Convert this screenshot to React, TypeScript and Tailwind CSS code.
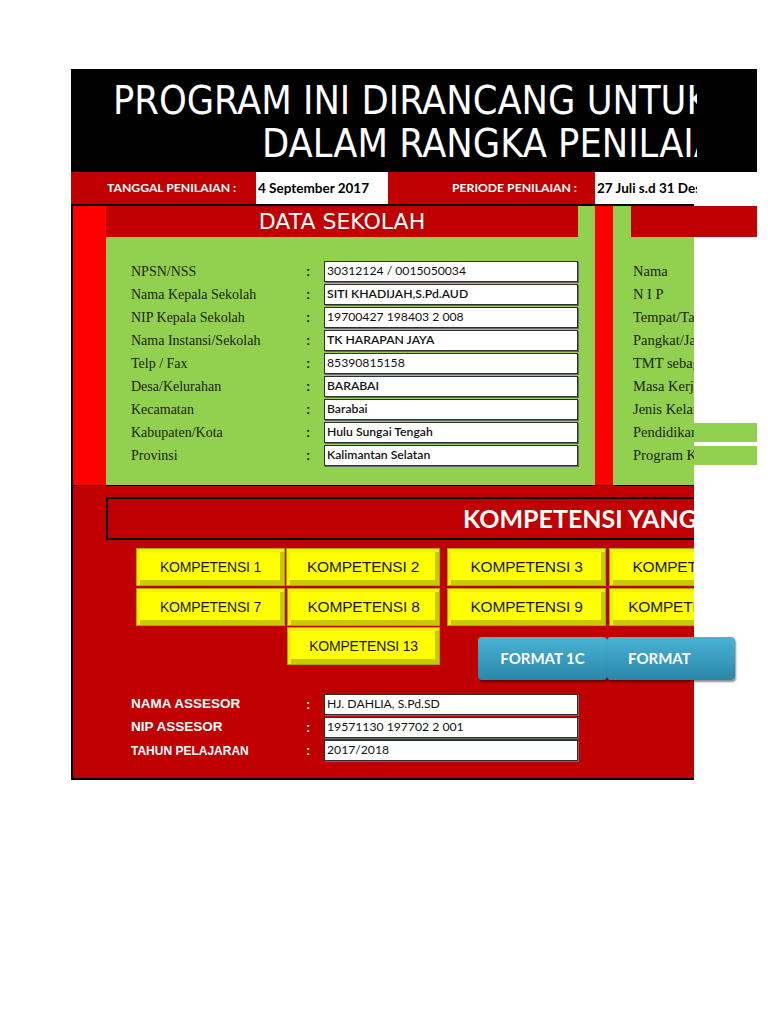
import type { ReactNode } from 'react';

const serif = { fontFamily: '"Liberation Serif", "Times New Roman", serif' };
const calibri = { fontFamily: 'Lato, "Open Sans", sans-serif' };
const dejavu = { fontFamily: '"DejaVu Sans", sans-serif' };
const arial = { fontFamily: '"Liberation Sans", Arial, sans-serif' };

const sekolah: { label: string; value: string; strong?: boolean }[] = [
  { label: 'NPSN/NSS', value: '30312124 / 0015050034' },
  { label: 'Nama Kepala Sekolah', value: 'SITI KHADIJAH,S.Pd.AUD', strong: true },
  { label: 'NIP Kepala Sekolah', value: '19700427 198403 2 008' },
  { label: 'Nama Instansi/Sekolah', value: 'TK HARAPAN JAYA', strong: true },
  { label: 'Telp / Fax', value: '85390815158' },
  { label: 'Desa/Kelurahan', value: 'BARABAI', strong: true },
  { label: 'Kecamatan', value: 'Barabai', strong: true },
  { label: 'Kabupaten/Kota', value: 'Hulu Sungai Tengah', strong: true },
  { label: 'Provinsi', value: 'Kalimantan Selatan', strong: true },
];

const guru: { label: string; extra?: boolean }[] = [
  { label: 'Nama' },
  { label: 'N I P' },
  { label: 'Tempat/Tanggal Lahir' },
  { label: 'Pangkat/Jabatan' },
  { label: 'TMT sebagai Guru' },
  { label: 'Masa Kerja' },
  { label: 'Jenis Kelamin' },
  { label: 'Pendidikan', extra: true },
  { label: 'Program Keahlian', extra: true },
];

const assesor = [
  { label: 'NAMA ASSESOR', value: 'HJ. DAHLIA, S.Pd.SD', size: 'text-[13.5px]' },
  { label: 'NIP ASSESOR', value: '19571130 197702 2 001', size: 'text-[13.5px]' },
  { label: 'TAHUN PELAJARAN', value: '2017/2018', size: 'text-[12px]' },
];

function InputBox({ children, strong }: Readonly<{ children: ReactNode; strong?: boolean }>) {
  return (
    <div
      className={
        'flex h-[21px] w-[254px] items-center border border-[#2f2f2f] bg-white pl-[2px] text-[12.2px] leading-none text-[#111] shadow-[1px_1px_0_#6b6b6b] ' +
        (strong ? 'font-semibold' : 'font-normal')
      }
      style={calibri}
    >
      {children}
    </div>
  );
}

function KButton({ label, width, big }: Readonly<{ label: string; width: string; big?: boolean }>) {
  return (
    <div
      className={
        'flex h-[38px] shrink-0 items-center justify-center border border-[#a8a800] bg-[#ffff00] text-[#1a1a00] shadow-[inset_3px_3px_0_#f2f200,inset_-4px_-5px_0_#c9c900] ' +
        width +
        ' ' +
        (big ? 'text-[15.5px]' : 'text-[14px]')
      }
      style={arial}
    >
      <span className="tracking-[-0.2px]">{label}</span>
    </div>
  );
}

// the sheet's print area stops at x=694, so the second label is cut there
function FormatButton({ label, width, clip }: Readonly<{ label: string; width: string; clip?: boolean }>) {
  return (
    <div
      className={
        'flex h-[43px] shrink-0 items-center rounded-[4px] bg-gradient-to-b from-[#49b3d6] to-[#2a87a8] text-[15px] font-bold text-white shadow-[1px_2px_2px_rgba(0,0,0,0.45)] ' +
        width +
        (clip ? ' justify-start' : ' justify-center')
      }
      style={calibri}
    >
      {clip ? (
        <div className="w-[87px] overflow-hidden whitespace-nowrap pl-[21px]">{label}</div>
      ) : (
        label
      )}
    </div>
  );
}

export default function App() {
  return (
    <div className="min-h-[1024px] w-[768px] bg-white pt-[69px] pl-[71px]">
      {/* judul */}
      <div className="h-[103px] w-[686px] bg-black pt-[10px]">
        <div
          className="w-[626px] overflow-hidden whitespace-nowrap text-white"
          style={{ fontFamily: '"DejaVu Sans Condensed", "DejaVu Sans", sans-serif' }}
        >
          <div className="pl-[42px] text-[39.3px] leading-[43px]">PROGRAM INI DIRANCANG UNTUK MEMBANTU</div>
          <div className="pl-[191px] text-[39.3px] leading-[43px]">DALAM RANGKA PENILAIAN KINERJA GURU</div>
        </div>
      </div>

      <div className="flex h-[32px] w-[626px]">
        <div
          className="flex w-[185px] items-center bg-[#c00000] pl-[36px] text-[12.2px] font-bold text-white"
          style={calibri}
        >
          TANGGAL PENILAIAN :
        </div>
        <div className="flex w-[132px] items-center bg-white pl-[2px] text-[13.5px] font-bold text-black" style={calibri}>
          4 September 2017
        </div>
        <div
          className="flex w-[207px] items-center bg-[#c00000] pl-[64px] text-[12.2px] font-bold text-white"
          style={calibri}
        >
          PERIODE PENILAIAN :
        </div>
        <div
          className="flex w-[102px] items-center overflow-hidden whitespace-nowrap bg-white pl-[2px] text-[13.5px] font-bold text-black"
          style={calibri}
        >
          27 Juli s.d 31 Desember 2017
        </div>
      </div>

      {/* isi */}
      <div className="w-[623px] border-t-2 border-b-2 border-l-2 border-black bg-[#c00000]">
        <div className="flex h-[280px] border-b border-black">
          <div className="w-[33px] bg-[#ff0000]" />
          <div className="flex w-[489px] flex-col">
            <div className="flex h-[31px]">
              <div className="flex w-[472px] items-center justify-center bg-[#c00000] text-[22px] text-white" style={dejavu}>
                DATA SEKOLAH
              </div>
              <div className="w-[17px] bg-[#92d050]" />
            </div>
            <div className="flex flex-1 flex-col gap-[2px] bg-[#92d050] pt-[24px] pl-[25px]">
              {sekolah.map(row => (
                <div key={row.label} className="flex h-[21px] items-center">
                  <div className="w-[175px] text-[14px] text-[#1c2410]" style={serif}>
                    {row.label}
                  </div>
                  <div className="w-[18px] text-[13px] font-bold text-[#1c2410]" style={arial}>
                    :
                  </div>
                  <InputBox strong={row.strong}>{row.value}</InputBox>
                </div>
              ))}
            </div>
          </div>
          <div className="w-[18px] bg-[#ff0000]" />
          <div className="w-[18px] bg-[#92d050]" />
          <div className="flex w-[63px] flex-col">
            <div className="h-[31px] w-[126px] shrink-0 bg-[#c00000]" />
            <div className="flex flex-1 flex-col gap-[2px] bg-[#92d050] pt-[24px]">
              {guru.map(row => (
                <div key={row.label} className="flex h-[21px] items-center">
                  <div
                    className="w-[63px] shrink-0 overflow-hidden whitespace-nowrap pl-[2px] text-[14.5px] text-[#1c2410]"
                    style={serif}
                  >
                    {row.label}
                  </div>
                  {row.extra && <div className="h-[19px] w-[63px] shrink-0 bg-[#92d050]" />}
                </div>
              ))}
            </div>
          </div>
        </div>

        <div className="pt-[11px] pb-[17px]">
          <div className="ml-[33px] flex h-[43px] w-[588px] items-center overflow-hidden whitespace-nowrap border-t-2 border-b-2 border-l-2 border-black pl-[355px]">
            <span className="text-[25px] font-bold text-white" style={calibri}>
              KOMPETENSI YANG DINILAI
            </span>
          </div>

          <div className="mt-[8px] w-[621px] overflow-hidden">
            <div className="flex pl-[63px]">
              <KButton label="KOMPETENSI 1" width="w-[149px]" />
              <div className="ml-[1px]">
                <KButton label="KOMPETENSI 2" width="w-[154px]" big />
              </div>
              <div className="ml-[7px]">
                <KButton label="KOMPETENSI 3" width="w-[159px]" big />
              </div>
              <div className="ml-[3px]">
                <KButton label="KOMPETENSI 4" width="w-[159px]" big />
              </div>
            </div>
            <div className="mt-[2px] flex pl-[63px]">
              <KButton label="KOMPETENSI 7" width="w-[149px]" />
              <div className="ml-[2px]">
                <KButton label="KOMPETENSI 8" width="w-[153px]" big />
              </div>
              <div className="ml-[7px]">
                <KButton label="KOMPETENSI 9" width="w-[159px]" big />
              </div>
              <div className="ml-[3px]">
                <KButton label="KOMPETENSI 10" width="w-[159px]" big />
              </div>
            </div>
          </div>

          <div className="mt-[1px] flex items-start pl-[214px]">
            <KButton label="KOMPETENSI 13" width="w-[153px]" />
            <div className="mt-[10px] ml-[38px] flex">
              <FormatButton label="FORMAT 1C" width="w-[129px]" />
              <FormatButton label="FORMAT 1D" width="w-[128px]" clip />
            </div>
          </div>

          <div className="mt-[14px] flex flex-col gap-[2px] pl-[58px]">
            {assesor.map(row => (
              <div key={row.label} className="flex h-[21px] items-center">
                <div className={'w-[175px] font-bold text-white ' + row.size} style={arial}>
                  {row.label}
                </div>
                <div className="w-[18px] text-[13px] font-bold text-white" style={arial}>
                  :
                </div>
                <InputBox>{row.value}</InputBox>
              </div>
            ))}
          </div>
        </div>
      </div>
    </div>
  );
}
